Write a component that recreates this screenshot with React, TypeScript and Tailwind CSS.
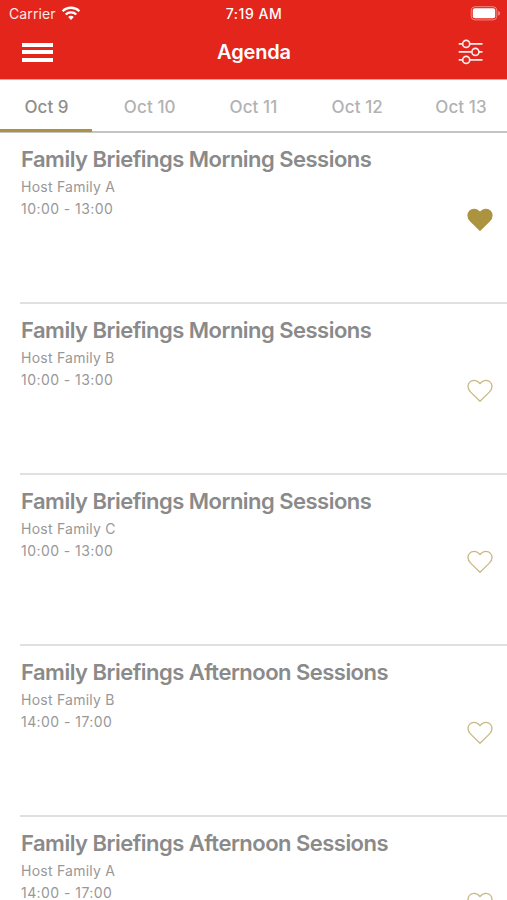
const days = ['Oct 9', 'Oct 10', 'Oct 11', 'Oct 12', 'Oct 13'];

const sessions = [
  { title: 'Family Briefings Morning Sessions', host: 'Host Family A', time: '10:00 - 13:00', liked: true },
  { title: 'Family Briefings Morning Sessions', host: 'Host Family B', time: '10:00 - 13:00', liked: false },
  { title: 'Family Briefings Morning Sessions', host: 'Host Family C', time: '10:00 - 13:00', liked: false },
  { title: 'Family Briefings Afternoon Sessions', host: 'Host Family B', time: '14:00 - 17:00', liked: false },
  { title: 'Family Briefings Afternoon Sessions', host: 'Host Family A', time: '14:00 - 17:00', liked: false },
];

function WifiIcon() {
  return (
    <svg width="20" height="15" viewBox="0 0 20 15" fill="none" stroke="#fff" strokeWidth="2.3">
      <path d="M1.6 5.2a12 12 0 0 1 16.8 0" />
      <path d="M4.7 8.5a7.6 7.6 0 0 1 10.6 0" />
      <path d="M10 13.900 7.200 11a4 4 0 0 1 5.600 0Z" fill="#fff" stroke="none" />
    </svg>
  );
}

function BatteryIcon() {
  return (
    <svg width="31" height="15" viewBox="0 0 31 15" fill="none">
      <rect x="1.2" y="0.7" width="25.6" height="13.2" rx="3.8" stroke="#fff" strokeOpacity="0.45" />
      <rect x="2.8" y="2.3" width="22.4" height="10" rx="2" fill="#fff" />
      <path d="M28.2 5v4.600c1.100-.4 1.800-1.200 1.800-2.300s-.7-1.900-1.800-2.300Z" fill="#fff" fillOpacity="0.5" />
    </svg>
  );
}

function FilterIcon() {
  return (
    <svg width="26" height="26" viewBox="0 0 26 26" fill="none" stroke="#fff" strokeOpacity="0.92" strokeWidth="1.6">
      <path d="M0.700 4.900h3.800M12 4.900h12.500M0.700 12.900h12.800M21 12.900h3.500M0.700 20.900h3.800M12 20.900h12.500" />
      <circle cx="8.200" cy="4.900" r="3.500" />
      <circle cx="17.400" cy="12.900" r="3.500" />
      <circle cx="8.200" cy="20.900" r="3.500" />
    </svg>
  );
}

function Heart({ filled }: { filled: boolean }) {
  return (
    <svg
      className="shrink-0"
      width="26"
      height="24"
      viewBox="0 0 26 24"
      fill={filled ? '#ac9340' : 'none'}
      stroke={filled ? '#ac9340' : '#c8b985'}
      strokeWidth="1.3"
      strokeLinejoin="round"
    >
      <path d="M13 4.700C11.300 2.300 9.400 1.400 7 1.400C3.600 1.400 1 4 1 7.400C1 9.800 2.100 11.600 3.900 13.400L13 22.300L22.100 13.400C23.900 11.600 25 9.800 25 7.400C25 4 22.400 1.400 19 1.400C16.600 1.400 14.700 2.300 13 4.700Z" />
    </svg>
  );
}

export default function App() {
  return (
    <div className="flex h-[900px] w-[507px] flex-col overflow-hidden bg-white font-['Inter',sans-serif] text-[#8a8a8a]">
      <header className="h-[79px] shrink-0 bg-[#e3251b] text-white">
        <div className="grid h-[27px] grid-cols-3 items-center">
          <div className="flex items-center gap-[5px] pl-[9px]">
            <span className="text-sm tracking-[0.1px] opacity-90">Carrier</span>
            <WifiIcon />
          </div>
          <span className="pl-px text-center text-sm font-medium tracking-[0.5px]">7:19 AM</span>
          <div className="flex justify-end pr-[6px]">
            <BatteryIcon />
          </div>
        </div>
        <div className="grid h-[50px] grid-cols-3 items-center">
          <div className="flex flex-col gap-[3.5px] pl-[22px]">
            <span className="h-[4px] w-[31px] bg-white" />
            <span className="h-[4px] w-[31px] bg-white" />
            <span className="h-[4px] w-[31px] bg-white" />
          </div>
          <h1 className="pl-px text-center text-xl font-semibold tracking-[-0.15px]">Agenda</h1>
          <div className="flex justify-end pr-[23px]">
            <FilterIcon />
          </div>
        </div>
      </header>

      <nav className="flex h-[54px] shrink-0 justify-between border-t border-b-2 border-t-[#f6a09c] border-b-[#c4c4c4]">
        {days.map((day, i) => (
          <button
            key={day}
            className={
              i === 0
                ? '-mb-px flex w-[92px] items-center justify-center border-b-[3px] border-[#ac9340] pt-[6px] pl-px text-[17px] font-medium text-[#8e8e8e]'
                : 'flex w-[92px] items-center justify-center pt-[4px] text-[17px] font-medium tracking-[0.1px] text-[#b2b2b2]'
            }
          >
            {day}
          </button>
        ))}
      </nav>

      <main className="flex flex-col pl-5">
        {sessions.map((s, i) => (
          <article key={i} className="flex h-[171px] shrink-0 items-start justify-between border-b-2 border-[#e0e0e0] pt-[10px] pr-[14px] pl-px">
            <div className="whitespace-nowrap">
              <h2 className="text-[22px] leading-8 font-semibold tracking-[-0.52px]">{s.title}</h2>
              <p className="pt-px text-sm leading-[22px] tracking-[0.24px] text-[#989898]">{s.host}</p>
              <p className="text-sm leading-[22px] tracking-[0.44px] text-[#989898]">{s.time}</p>
            </div>
            <div className="pt-[65px]">
              <Heart filled={s.liked} />
            </div>
          </article>
        ))}
      </main>
    </div>
  );
}
